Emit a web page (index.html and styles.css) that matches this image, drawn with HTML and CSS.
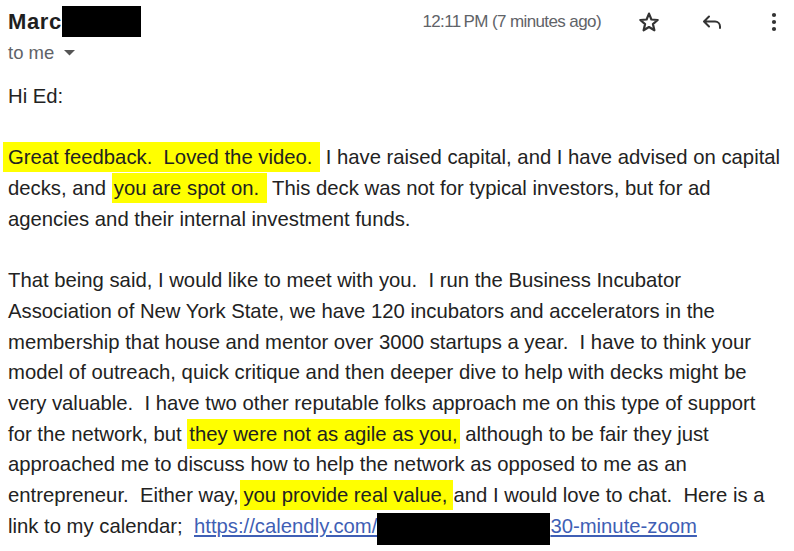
FILE: index.html
```html
<!DOCTYPE html>
<html>
<head>
<meta charset="utf-8">
<link rel="stylesheet" href="styles.css">
</head>
<body>
<div class="mail">
  <div class="header">
    <div class="sender">
      <div class="name-row"><span class="name">Marc</span><span class="redact-name"></span></div>
      <div class="tome">to me <svg class="caret" width="11" height="6" viewBox="0 0 11 6"><path d="M0 0h11L5.5 5.5z" fill="#555"/></svg></div>
    </div>
    <div class="meta">
      <span class="time">12:11&#8239;PM (7 minutes ago)</span>
      <svg class="icon star" width="24" height="24" viewBox="0 0 24 24"><path d="M12 3.6l2.4 5.9 6.3.5-4.8 4.1 1.5 6.2L12 17l-5.4 3.3 1.5-6.2-4.8-4.1 6.3-.5z" fill="none" stroke="#333" stroke-width="2.2" stroke-linejoin="round"/></svg>
      <svg class="icon reply" width="24" height="24" viewBox="0 0 24 24"><path d="M9 6.5L4 11.5l5 5M4.5 11.5H15a5 5 0 0 1 5 5V18" fill="none" stroke="#333" stroke-width="2" stroke-linecap="round" stroke-linejoin="round"/></svg>
      <svg class="icon more" width="24" height="24" viewBox="0 0 24 24"><circle cx="12" cy="5" r="2.1" fill="#333"/><circle cx="12" cy="12" r="2.1" fill="#333"/><circle cx="12" cy="19" r="2.1" fill="#333"/></svg>
    </div>
  </div>
  <div class="body">
    <p>Hi Ed:</p>
    <p><span class="hl hl-first">Great feedback.&nbsp; Loved the video.&nbsp;</span> I have raised capital, and I have advised on capital<br>decks, and <span class="hl">you are spot on.&nbsp;</span> This deck was not for typical investors, but for ad<br>agencies and their internal investment funds.</p>
    <p>That being said, I would like to meet with you.&nbsp; I run the Business Incubator<br>Association of New York State, we have 120 incubators and accelerators in the<br>membership that house and mentor over 3000 startups a year.&nbsp; I have to think your<br>model of outreach, quick critique and then deeper dive to help with decks might be<br>very valuable.&nbsp; I have two other reputable folks approach me on this type of support<br>for the network, but <span class="hl">they were not as agile as you,</span> although to be fair they just<br>approached me to discuss how to help the network as opposed to me as an<br>entrepreneur.&nbsp; Either way, <span class="hl hl-wide">you provide real value,</span>and I would love to chat.&nbsp; Here is a<br>link to my calendar;&nbsp; <a class="link" href="#">https://calendly.com/<span class="redact-link"></span>30-minute-zoom</a></p>
  </div>
</div>
</body>
</html>
```
FILE: styles.css
```css
html, body {
  margin: 0;
  padding: 0;
  background: #fff;
}
.mail {
  padding: 0 8px;
  font-family: "Liberation Sans", Arial, sans-serif;
  color: #222;
}
.header {
  display: flex;
  justify-content: space-between;
  align-items: flex-start;
}
.sender {
  padding-top: 6px;
}
.name-row {
  display: flex;
  align-items: flex-start;
  height: 31px;
}
.name {
  font-weight: bold;
  font-size: 22px;
  letter-spacing: 0.6px;
  line-height: 20px;
  margin-top: 6px;
  color: #1f1f1f;
}
.redact-name {
  display: inline-block;
  width: 79px;
  height: 31px;
  background: #000;
  margin-left: 0;
}
.tome {
  font-size: 18.5px;
  color: #5f6368;
  margin-top: 6px;
  line-height: 20px;
}
.caret {
  margin-left: 5px;
  vertical-align: 3px;
}
.meta {
  display: flex;
  align-items: center;
  padding-top: 10px;
  margin-right: 0;
}
.time {
  font-family: "Liberation Sans", Arial, sans-serif;
  font-size: 17px;
  letter-spacing: -0.6px;
  color: #5f6368;
  margin-right: 36px;
}
.icon {
  display: block;
}
.star {
  margin-right: 39px;
}
.reply {
  margin-right: 38px;
}
.body {
  margin-top: 18px;
  font-size: 20.3px;
  line-height: 30.7px;
}
.body p {
  margin: 0 0 30.7px 0;
}
.hl {
  background: #ffff00;
  padding: 4px 2px;
}
.hl-first {
  margin-left: -5px;
  padding-left: 5px;
}
.hl-wide {
  margin-left: -4px;
  padding: 4px 6px 4px 3px;
}
.link {
  color: #3f5fb5;
  text-decoration: underline;
}
.redact-link {
  display: inline-block;
  width: 173px;
  height: 32px;
  background: #000;
  vertical-align: -12px;
}
```
